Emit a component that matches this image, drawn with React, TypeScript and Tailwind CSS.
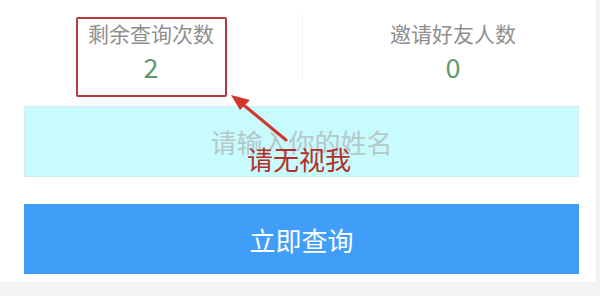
import React from "react";

const font = { fontFamily: '"Noto Sans CJK SC", "Noto Sans", sans-serif' };

function Stat({ label, value }: { label: string; value: string }) {
  return (
    <div className="flex flex-col items-center pt-[19px]">
      <div className="text-[21px] leading-[28px] text-[#8f8f8f]">{label}</div>
      <div className="mt-[4px] text-[27px] leading-[32px] text-[#5f9a6c]">{value}</div>
    </div>
  );
}

export default function App() {
  return (
    <div
      className="relative w-[600px] h-[296px] overflow-hidden bg-[#f3f3f3]"
      style={font}
    >
      <div className="h-[282px] w-[597px] bg-white border-r border-[#ececec] overflow-hidden">
        {/* stats */}
        <div className="relative grid grid-cols-[302px_302px] h-[106px] w-[604px]">
          <Stat label="剩余查询次数" value="2" />
          <Stat label="邀请好友人数" value="0" />
          <div className="absolute left-[302px] top-[15px] h-[65px] w-px bg-[#efefef]" />
        </div>

        <div className="mx-[24px] w-[555px] h-[71px] bg-[#c8fbfd] border border-[#d3ecec] flex items-center justify-center">
          <span className="text-[26px] text-[#b5c7c7]">请输入你的姓名</span>
        </div>

        <button className="mt-[27px] mx-[24px] w-[555px] h-[70px] bg-[#419ef8] text-white text-[26px] flex items-center justify-center">
          立即查询
        </button>
      </div>

      {/* annotation */}
      <div className="absolute left-[76px] top-[17px] w-[151px] h-[80px] border-2 border-[#b33b3b] rounded-[2px]" />
      <svg
        className="absolute left-0 top-0"
        width="600"
        height="296"
        viewBox="0 0 600 296"
      >
        <line x1="286" y1="140" x2="240" y2="102" stroke="#d2362c" strokeWidth="3" strokeLinecap="round" />
        <polygon points="231,95 250,100 240,110" fill="#d2362c" />
      </svg>
      <div className="absolute left-[247px] top-[142px] text-[26px] leading-[34px] text-[#b3302a]">
        请无视我
      </div>
    </div>
  );
}
